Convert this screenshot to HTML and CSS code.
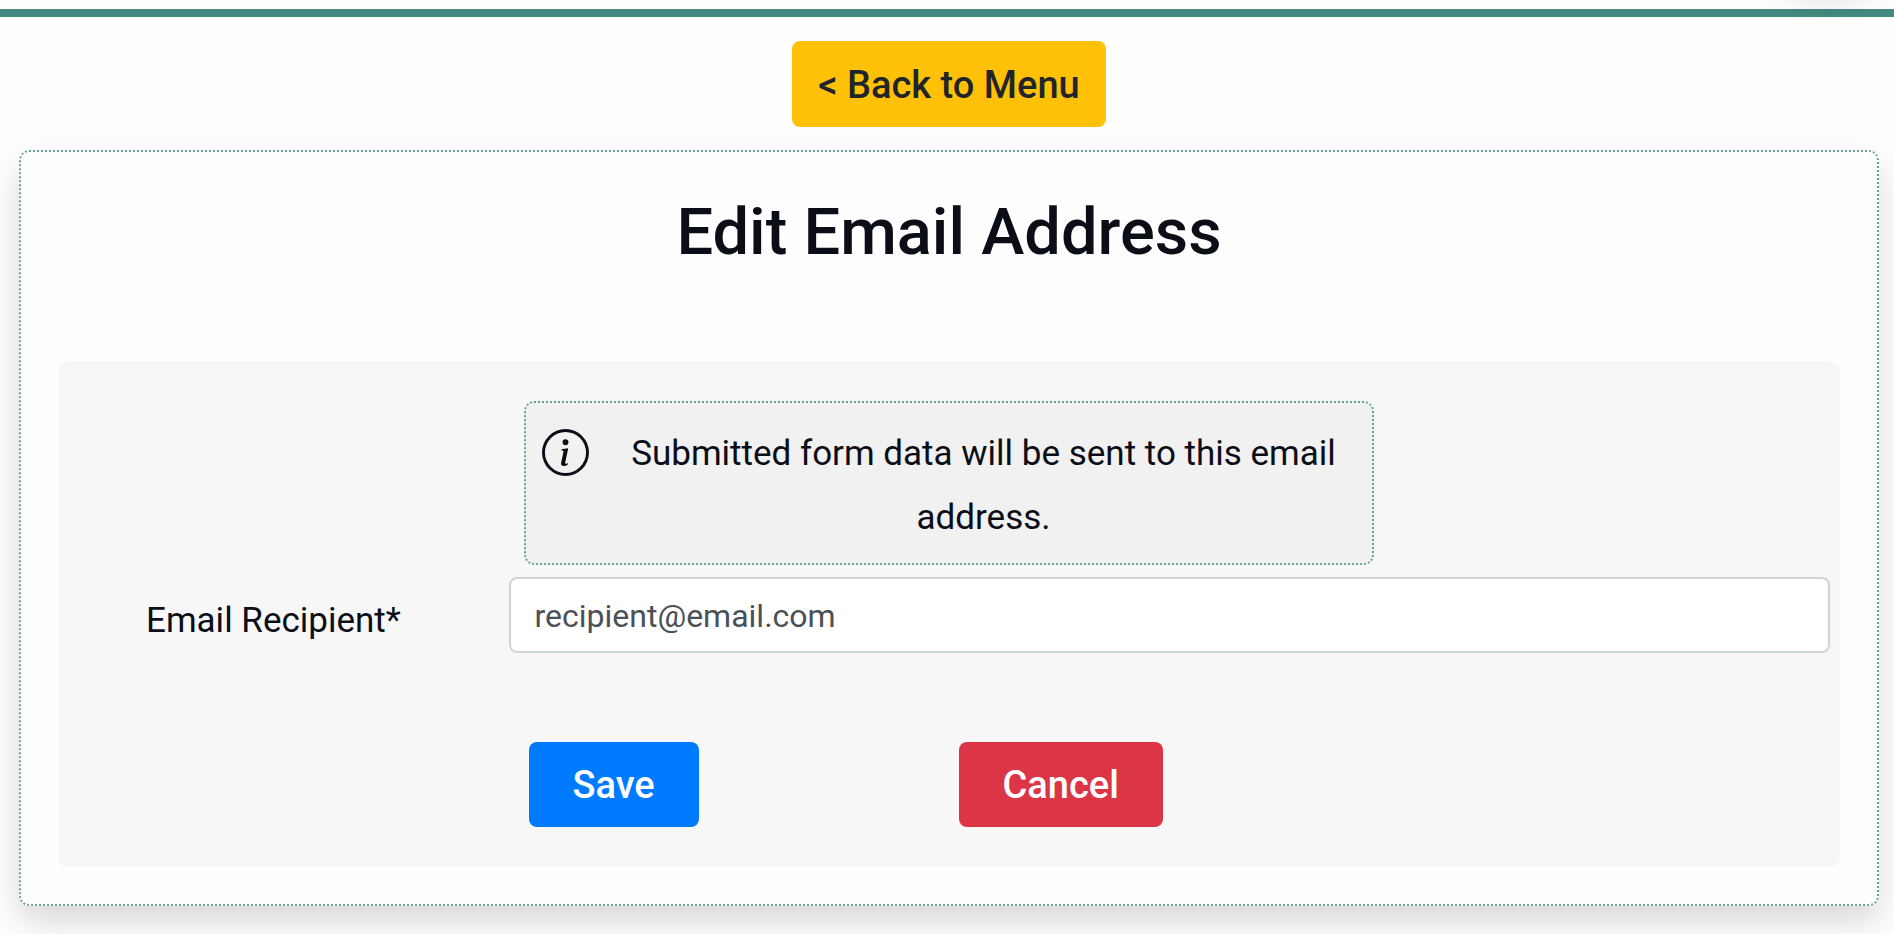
FILE: index.html
```html
<!DOCTYPE html>
<html lang="en">
<head>
<meta charset="utf-8">
<meta name="viewport" content="width=device-width, initial-scale=1">
<title>Edit Email Address</title>
<link rel="stylesheet" href="styles.css">
</head>
<body>
<header class="topbar"><span class="topbar-shade"></span></header>
<main class="page">
  <a class="btn btn-warning" href="#">&lt; Back to Menu</a>
  <section class="card">
    <h1 class="title">Edit Email Address</h1>
    <form class="panel">
      <div class="info">
        <svg class="info-icon" viewBox="0 0 16 16" aria-hidden="true">
          <path d="M8 15A7 7 0 1 1 8 1a7 7 0 0 1 0 14zm0 1A8 8 0 1 0 8 0a8 8 0 0 0 0 16z"/>
          <path d="m8.93 6.588-2.29.287-.082.38.45.083c.294.07.352.176.288.469l-.738 3.468c-.194.897.105 1.319.808 1.319.545 0 1.178-.252 1.465-.598l.088-.416c-.2.176-.492.246-.686.246-.275 0-.375-.193-.304-.533L8.93 6.588zM9 4.5a1 1 0 1 1-2 0 1 1 0 0 1 2 0z"/>
        </svg>
        <p class="info-text">Submitted form data will be sent to this email address.</p>
      </div>
      <div class="field">
        <label class="label" for="recipient">Email Recipient*</label>
        <input class="input" id="recipient" type="email" value="recipient@email.com">
      </div>
      <div class="actions">
        <div class="action"><button class="btn btn-primary" type="submit">Save</button></div>
        <div class="action"><button class="btn btn-danger" type="button">Cancel</button></div>
      </div>
    </form>
  </section>
</main>
</body>
</html>
```
FILE: styles.css
```css
* { box-sizing: border-box; }

body {
  margin: 0;
  background: #fefefe;
  color: #0c0e17;
  font-family: Roboto, "Liberation Sans", sans-serif;
  font-size: 35px;
  line-height: 64px;
  overflow: hidden;
}

.topbar {
  position: relative;
  height: 17px;
  border-bottom: 8px solid #44897f;
}

.topbar-shade {
  position: absolute;
  top: -80px;
  right: 18px;
  width: 96px;
  height: 60px;
  border-radius: 30px;
  box-shadow: 0 16px 32px rgba(0, 0, 0, 0.15);
}

.page {
  display: flex;
  flex-direction: column;
  align-items: center;
  gap: 23px;
  padding: 24px 15px 28px 19px;
}

.btn {
  display: block;
  padding: 13px 44px 12px;
  border: 0;
  border-radius: 8px;
  font-family: inherit;
  font-size: 38px;
  font-weight: 500;
  line-height: 60px;
  text-decoration: none;
  color: #fff;
}

.btn-warning { padding: 14px 26px 12px; background: #ffc107; color: #212529; }
.btn-primary { background: #007bff; }
.btn-danger { background: #dc3545; }

.card {
  width: 100%;
  padding: 37px;
  border: 2px dotted #66a297;
  border-radius: 10px;
  background: #fefefe;
  box-shadow: 0 16px 32px rgba(0, 0, 0, 0.15);
}

.title {
  margin: 0;
  padding: 3px 0 89px;
  font-size: 65px;
  font-weight: 500;
  line-height: 80px;
  text-align: center;
}

.panel {
  padding: 40px 10px;
  border-radius: 10px;
  background: #f7f7f7;
}

.info {
  display: flex;
  align-items: flex-start;
  gap: 22px;
  max-width: 850px;
  margin: 0 auto 12px;
  padding: 16px 16px 13px;
  border: 2px dotted #66a297;
  border-radius: 10px;
  background: #f1f1f1;
}

.info-icon {
  flex: none;
  width: 47px;
  height: 47px;
  margin-top: 10px;
  fill: #0c0e17;
}

.info-text {
  flex: 1;
  margin: 0;
  padding-top: 3px;
  text-align: center;
}

.field {
  display: grid;
  grid-template-columns: 1fr 3fr;
  align-items: center;
}

.label { padding: 12px 0 0 78px; }

.input {
  width: 100%;
  height: 76px;
  padding: 2px 24px 0;
  border: 2px solid #ced4da;
  border-radius: 8px;
  background: #fff;
  color: #495057;
  font-family: inherit;
  font-size: 32px;
}

.actions {
  display: grid;
  grid-template-columns: 430px 1fr;
  margin: 89px 0 0 25%;
  padding-left: 20px;
}

.action {
  display: flex;
}
```
